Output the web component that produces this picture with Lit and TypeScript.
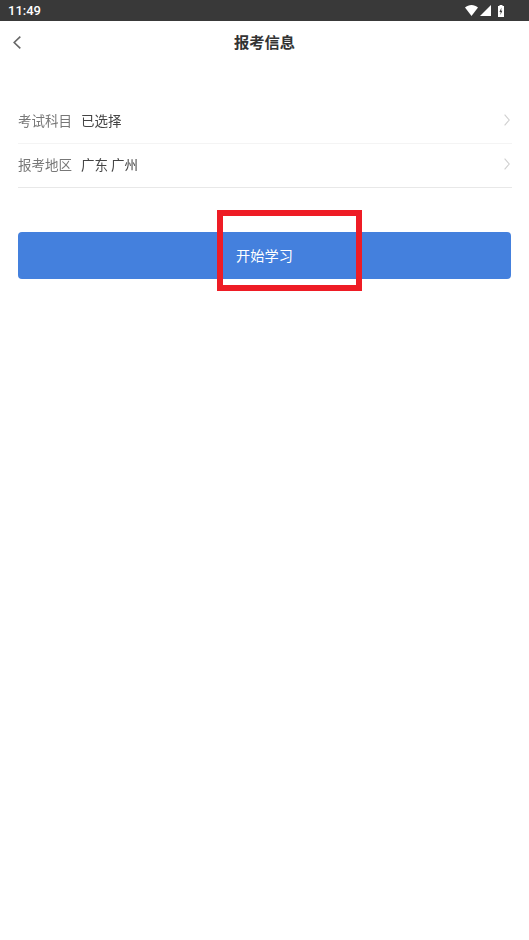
import { LitElement, html, css } from "lit";
import { customElement } from "lit/decorators.js";

@customElement("app-root")
export class AppRoot extends LitElement {
  static styles = css`
    :host {
      display: block;
      width: 529px;
      height: 940px;
      background: #fff;
      font-family: "Noto Sans CJK SC", "Roboto", sans-serif;
      overflow: hidden;
      position: relative;
    }
    .status {
      height: 21px;
      background: #393939;
      display: flex;
      align-items: center;
      justify-content: space-between;
      padding: 0 25px 0 8px;
      color: #fff;
    }
    .time {
      font: 500 13px/21px Roboto, sans-serif;
    }
    .sys {
      display: flex;
      align-items: center;
    }
    .sys svg {
      display: block;
    }
    .wifi {
      margin-right: 2px;
    }
    .cell {
      margin-right: 7px;
    }
    .nav {
      height: 44px;
      display: flex;
      align-items: center;
      justify-content: center;
      position: relative;
    }
    .back {
      position: absolute;
      left: 13px;
      top: 15px;
    }
    .title {
      font-size: 15.3px;
      font-weight: 700;
      color: #333;
      line-height: 40px;
      padding-bottom: 4px;
    }
    .form {
      margin: 34px 17.5px 0;
      will-change: transform;
    }
    .row {
      box-sizing: border-box;
      height: 44px;
      padding-bottom: 3px;
      display: flex;
      align-items: center;
      font-size: 13.5px;
      border-bottom: 1px solid #f4f4f4;
    }
    .row.first {
      height: 45px;
    }
    .row.last {
      border-bottom-color: #e8e8e8;
      padding-bottom: 3px;
    }
    .label {
      width: 63px;
      color: #777;
      flex: none;
    }
    .value {
      color: #444;
      flex: 1;
    }
    .chev {
      margin-right: 2px;
      flex: none;
    }
    .btn {
      margin: 44px 18px 0 18px;
      height: 47px;
      background: #4480dd;
      border-radius: 4px;
      color: #fff;
      font-size: 14.2px;
      display: flex;
      align-items: center;
      justify-content: center;
      padding: 0 0 2px 0;
      box-sizing: border-box;
    }
    .mark {
      position: absolute;
      left: 216.5px;
      top: 210px;
      width: 145px;
      height: 80.5px;
      box-sizing: border-box;
      border: 6px solid #ee1c25;
    }
  `;

  render() {
    const chev = html`<svg class="chev" width="6" height="12" viewBox="0 0 6 12" fill="none" stroke="#cfcfcf" stroke-width="1.1"><path d="M.6.600 5.200 6 .6 11.400"/></svg>`;
    return html`
      <div class="status">
        <span class="time">11:49</span>
        <div class="sys">
          <svg class="wifi" width="13" height="11" viewBox="0 0 13 11" fill="#fff"><path d="M0 2.600C1.800.9 4.100 0 6.500 0s4.700.9 6.500 2.600L6.500 11z"/></svg>
          <svg class="cell" width="11" height="11" viewBox="0 0 11 11" fill="#fff"><path d="M11 0v11H0z"/></svg>
          <svg width="6" height="12" viewBox="0 0 6 12"><path fill="#fff" d="M1.500 0h3v1H6v11H0V1h1.500z"/><path fill="#393939" d="M3.400 2.500 1.500 7h1.200l-.3 3 2-4.300H3.200z"/></svg>
        </div>
      </div>
      <div class="nav">
        <svg class="back" width="8" height="13" viewBox="0 0 8 13" fill="none" stroke="#666" stroke-width="1.6"><path d="M7.300.6 1.200 6.500 7.300 12.400"/></svg>
        <span class="title">报考信息</span>
      </div>
      <div class="form">
        <div class="row first"><span class="label">考试科目</span><span class="value">已选择</span>${chev}</div>
        <div class="row last"><span class="label">报考地区</span><span class="value">广东 广州</span>${chev}</div>
      </div>
      <div class="btn">开始学习</div>
      <div class="mark"></div>
    `;
  }
}
